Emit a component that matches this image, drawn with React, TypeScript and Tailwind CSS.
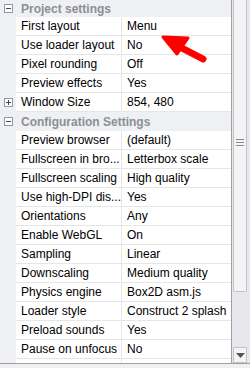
import type { FC } from 'react';

type Row =
  | { kind: 'group'; label: string; open: boolean }
  | { kind: 'prop'; name: string; value: string; expander?: boolean };

const rows: Row[] = [
  { kind: 'group', label: 'Project settings', open: true },
  { kind: 'prop', name: 'First layout', value: 'Menu' },
  { kind: 'prop', name: 'Use loader layout', value: 'No' },
  { kind: 'prop', name: 'Pixel rounding', value: 'Off' },
  { kind: 'prop', name: 'Preview effects', value: 'Yes' },
  { kind: 'prop', name: 'Window Size', value: '854, 480', expander: true },
  { kind: 'group', label: 'Configuration Settings', open: true },
  { kind: 'prop', name: 'Preview browser', value: '(default)' },
  { kind: 'prop', name: 'Fullscreen in bro...', value: 'Letterbox scale' },
  { kind: 'prop', name: 'Fullscreen scaling', value: 'High quality' },
  { kind: 'prop', name: 'Use high-DPI dis...', value: 'Yes' },
  { kind: 'prop', name: 'Orientations', value: 'Any' },
  { kind: 'prop', name: 'Enable WebGL', value: 'On' },
  { kind: 'prop', name: 'Sampling', value: 'Linear' },
  { kind: 'prop', name: 'Downscaling', value: 'Medium quality' },
  { kind: 'prop', name: 'Physics engine', value: 'Box2D asm.js' },
  { kind: 'prop', name: 'Loader style', value: 'Construct 2 splash' },
  { kind: 'prop', name: 'Preload sounds', value: 'Yes' },
  { kind: 'prop', name: 'Pause on unfocus', value: 'No' },
];

const Toggle: FC<{ open: boolean }> = ({ open }) => (
  <svg width="9" height="9" viewBox="0 0 9 9" className="block">
    <rect x="0.5" y="0.5" width="8" height="8" fill="#fff" stroke="#8f9aa8" />
    <line x1="2" y1="4.5" x2="7" y2="4.5" stroke="#3b4a5c" />
    {!open && <line x1="4.5" y1="2" x2="4.5" y2="7" stroke="#3b4a5c" />}
  </svg>
);

const PropertyGrid: FC = () => (
  <div className="flex w-[231px] flex-col bg-white">
    {rows.map((row, i) =>
      row.kind === 'group' ? (
        <div
          key={i}
          className={`flex ${i === 0 ? 'h-[17px]' : 'h-[19px]'} items-center bg-[#eef0f3]`}
        >
          <div className="flex w-[16px] justify-center">
            <Toggle open={row.open} />
          </div>
          <span className="pl-[5px] text-[12px] font-bold text-[#8d8f93]">{row.label}</span>
        </div>
      ) : (
        <div key={i} className="flex h-[19px]">
          <div className="flex w-[16px] items-center justify-center bg-[#eef0f3]">
            {row.expander && <Toggle open={false} />}
          </div>
          <div className="flex flex-1 border-b border-[#e6e6e6]">
            <div className="w-[106px] overflow-hidden whitespace-nowrap border-r border-[#e6e6e6] pl-[5px] leading-[18px]">
              {row.name}
            </div>
            <div className="flex-1 overflow-hidden whitespace-nowrap pl-[5px] leading-[18px]">
              {row.value}
            </div>
          </div>
        </div>
      )
    )}
    <div className="flex flex-1">
      <div className="w-[16px] bg-[#eef0f3]" />
      <div className="flex flex-1">
        <div className="w-[106px] border-r border-[#e6e6e6]" />
      </div>
    </div>
  </div>
);

const Scrollbar: FC = () => (
  <div className="flex w-[19px] flex-col border-l border-[#a0a0a0] bg-[#e8e8ec] pl-[1px] pr-[3px]">
    <div className="flex h-[292px] items-center justify-center rounded-b-[2px] border border-t-0 border-[#c2c3c9] bg-[#f4f4f6]">
      <svg width="8" height="7" viewBox="0 0 8 7" className="mt-[-6px]">
        <rect x="0" y="0" width="8" height="1" fill="#8a8a8a" />
        <rect x="0" y="3" width="8" height="1" fill="#8a8a8a" />
        <rect x="0" y="6" width="8" height="1" fill="#8a8a8a" />
      </svg>
    </div>
    <div className="flex-1" />
    <div className="flex h-[16px] items-center justify-center border border-[#c2c3c9] bg-[#f4f4f6]">
      <svg width="9" height="5" viewBox="0 0 9 5">
        <polygon points="0,0 9,0 4.5,5" fill="#555" />
      </svg>
    </div>
  </div>
);

export default function App() {
  return (
    <div
      className="relative flex h-[368px] w-[250px] flex-col overflow-hidden bg-[#f0f0f0] text-[12px] text-black"
      style={{ fontFamily: '"Liberation Sans", Arial, sans-serif' }}
    >
      <div className="flex h-[363px]">
        <PropertyGrid />
        <Scrollbar />
      </div>
      <div className="flex-1 border-t border-[#a0a0a0]" />
      <svg
        width="250"
        height="368"
        viewBox="0 0 250 368"
        className="pointer-events-none absolute left-0 top-0"
      >
        <line x1="203" y1="59" x2="174" y2="44" stroke="#ff0000" strokeWidth="7" strokeLinecap="round" />
        <polygon
          points="163,37 188,38 177,54"
          fill="#ff0000"
          stroke="#ff0000"
          strokeWidth="3"
          strokeLinejoin="round"
        />
      </svg>
    </div>
  );
}
